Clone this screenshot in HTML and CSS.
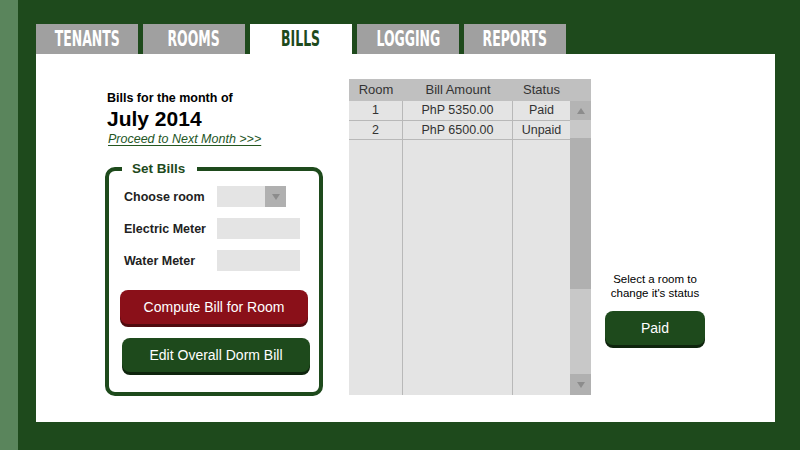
FILE: index.html
```html
<!DOCTYPE html>
<html>
<head>
<meta charset="utf-8">
<link rel="stylesheet" href="styles.css">
</head>
<body>
<div class="page">
  <div class="strip"></div>
  <div class="main">
    <nav class="tabs">
      <div class="tab"><span>TENANTS</span></div>
      <div class="tab"><span>ROOMS</span></div>
      <div class="tab active"><span>BILLS</span></div>
      <div class="tab"><span>LOGGING</span></div>
      <div class="tab"><span>REPORTS</span></div>
    </nav>
    <section class="panel">
      <div class="left">
        <div class="month-label">Bills for the month of</div>
        <div class="month">July 2014</div>
        <a class="next">Proceed to Next Month &gt;&gt;&gt;</a>
        <div class="setbills">
          <span class="legend">Set Bills</span>
          <div class="form">
            <label>Choose room</label>
            <div class="select"><span class="sel-arrow"><span class="tri-down"></span></span></div>
            <label>Electric Meter</label>
            <div class="input"></div>
            <label>Water Meter</label>
            <div class="input"></div>
          </div>
          <div class="buttons">
            <button class="btn red">Compute Bill for Room</button>
            <button class="btn green edit">Edit Overall Dorm Bill</button>
          </div>
        </div>
      </div>
      <div class="table">
        <div class="th">Room</div>
        <div class="th">Bill Amount</div>
        <div class="th">Status</div>
        <div class="th sb-head"></div>
        <div class="td c1">1</div>
        <div class="td c2">PhP 5350.00</div>
        <div class="td">Paid</div>
        <div class="scrollbar">
          <div class="sb-btn up"><span class="tri-up"></span></div>
          <div class="sb-track t1"></div>
          <div class="sb-thumb"></div>
          <div class="sb-track t2"></div>
          <div class="sb-btn down"><span class="tri-down"></span></div>
        </div>
        <div class="td c1">2</div>
        <div class="td c2">PhP 6500.00</div>
        <div class="td">Unpaid</div>
        <div class="fill c1"></div>
        <div class="fill c2"></div>
        <div class="fill"></div>
      </div>
      <div class="right">
        <p class="hint">Select a room to<br>change it's status</p>
        <button class="btn green paid">Paid</button>
      </div>
    </section>
  </div>
</div>
</body>
</html>
```
FILE: styles.css
```css
html, body {
  margin: 0;
  padding: 0;
}
body {
  width: 800px;
  height: 450px;
  background: #1e4a1c;
  font-family: "Liberation Sans", Arial, sans-serif;
  overflow: hidden;
}
.page {
  display: flex;
  height: 450px;
}
.strip {
  width: 18px;
  background: #5a855c;
}
.main {
  flex: 1;
  display: flex;
  flex-direction: column;
  padding: 24px 25px 28px 18px;
}
.tabs {
  display: flex;
  gap: 5px;
  height: 30px;
}
.tab {
  width: 102px;
  height: 30px;
  background: #a0a0a0;
  display: flex;
  align-items: center;
  justify-content: center;
}
.tab span {
  display: inline-block;
  font-family: "DejaVu Sans Condensed", "DejaVu Sans", sans-serif;
  font-weight: bold;
  font-size: 21px;
  line-height: 30px;
  color: #fff;
  transform: scaleX(0.66);
}
.tab.active {
  background: #fff;
}
.tab.active span {
  color: #1e4a1c;
}
.panel {
  flex: 1;
  background: #fff;
  display: flex;
  align-items: flex-start;
  padding: 25px 0 0 69px;
}
.left {
  width: 218px;
  padding-top: 12px;
  display: flex;
  flex-direction: column;
}
.month-label {
  font-size: 12.5px;
  font-weight: bold;
  line-height: 15px;
  color: #000;
  padding-left: 2px;
}
.month {
  font-size: 21px;
  font-weight: bold;
  line-height: 26px;
  color: #000;
  padding-left: 2px;
}
.next {
  align-self: flex-start;
  font-size: 12.5px;
  font-style: italic;
  line-height: 14px;
  color: #24561f;
  text-decoration: underline;
  text-underline-offset: 2px;
  margin-left: 3px;
}
.setbills {
  position: relative;
  margin-top: 21px;
  border: 4px solid #1e4a1c;
  border-radius: 10px;
  padding: 15px 0 20px 15px;
}
.legend {
  position: absolute;
  top: -10px;
  left: 13px;
  background: #fff;
  padding: 0 12px 0 10px;
  font-size: 13.5px;
  font-weight: bold;
  line-height: 16px;
  color: #1e4a1c;
}
.form {
  display: grid;
  grid-template-columns: 93px auto;
  grid-auto-rows: 21px;
  row-gap: 11px;
  align-items: center;
}
.form label {
  font-size: 12.5px;
  font-weight: bold;
  color: #222;
}
.select {
  width: 69px;
  height: 21px;
  background: #e4e4e4;
  display: flex;
  justify-content: flex-end;
}
.sel-arrow {
  width: 21px;
  height: 21px;
  background: #b0b0b0;
  display: flex;
  align-items: center;
  justify-content: center;
}
.input {
  width: 83px;
  height: 21px;
  background: #e4e4e4;
}
.tri-down {
  width: 0;
  height: 0;
  border-left: 4px solid transparent;
  border-right: 4px solid transparent;
  border-top: 6px solid #8c8c8c;
}
.tri-up {
  width: 0;
  height: 0;
  border-left: 4px solid transparent;
  border-right: 4px solid transparent;
  border-bottom: 6px solid #8c8c8c;
}
.buttons {
  display: flex;
  flex-direction: column;
  margin-top: 19px;
  margin-left: -4px;
}
.btn {
  width: 188px;
  height: 34px;
  border: none;
  border-radius: 8px;
  color: #fff;
  font-family: "Liberation Sans", Arial, sans-serif;
  font-size: 14px;
  padding: 0;
}
.btn.red {
  background: #8a1019;
  box-shadow: 0 3px 0 #4f0a0e;
}
.btn.green {
  background: #1e4a1c;
  box-shadow: 0 3px 0 #0e240d;
}
.btn.edit {
  margin-top: 14px;
  margin-left: 2px;
}
.table {
  margin-left: 26px;
  display: grid;
  grid-template-columns: 54px 110px 57px 21px;
  grid-template-rows: 22px 20px 19px 255px;
  background: #e4e4e4;
  color: #333;
}
.th {
  background: #c0c0c0;
  font-size: 13px;
  line-height: 22px;
  text-align: center;
}
.td {
  font-size: 12.5px;
  line-height: 19px;
  text-align: center;
  border-bottom: 1px solid #b8b8b8;
}
.c1, .c2 {
  border-right: 1px solid #b8b8b8;
}
.scrollbar {
  grid-column: 4;
  grid-row: 2 / 5;
  display: flex;
  flex-direction: column;
}
.sb-btn {
  background: #b4b4b4;
  display: flex;
  align-items: center;
  justify-content: center;
}
.sb-btn.up {
  height: 19px;
}
.sb-btn.down {
  height: 21px;
  background: #b0b0b0;
}
.sb-track {
  background: #c8c8c8;
}
.sb-track.t1 {
  height: 18px;
}
.sb-track.t2 {
  flex: 1;
}
.sb-thumb {
  height: 151px;
  background: #b0b0b0;
}
.right {
  margin-left: 14px;
  padding-top: 193px;
  width: 100px;
  display: flex;
  flex-direction: column;
  align-items: center;
}
.hint {
  margin: 0;
  font-size: 11.5px;
  line-height: 14px;
  text-align: center;
  color: #000;
  white-space: nowrap;
}
.btn.paid {
  width: 100px;
  margin-top: 11px;
}
```
